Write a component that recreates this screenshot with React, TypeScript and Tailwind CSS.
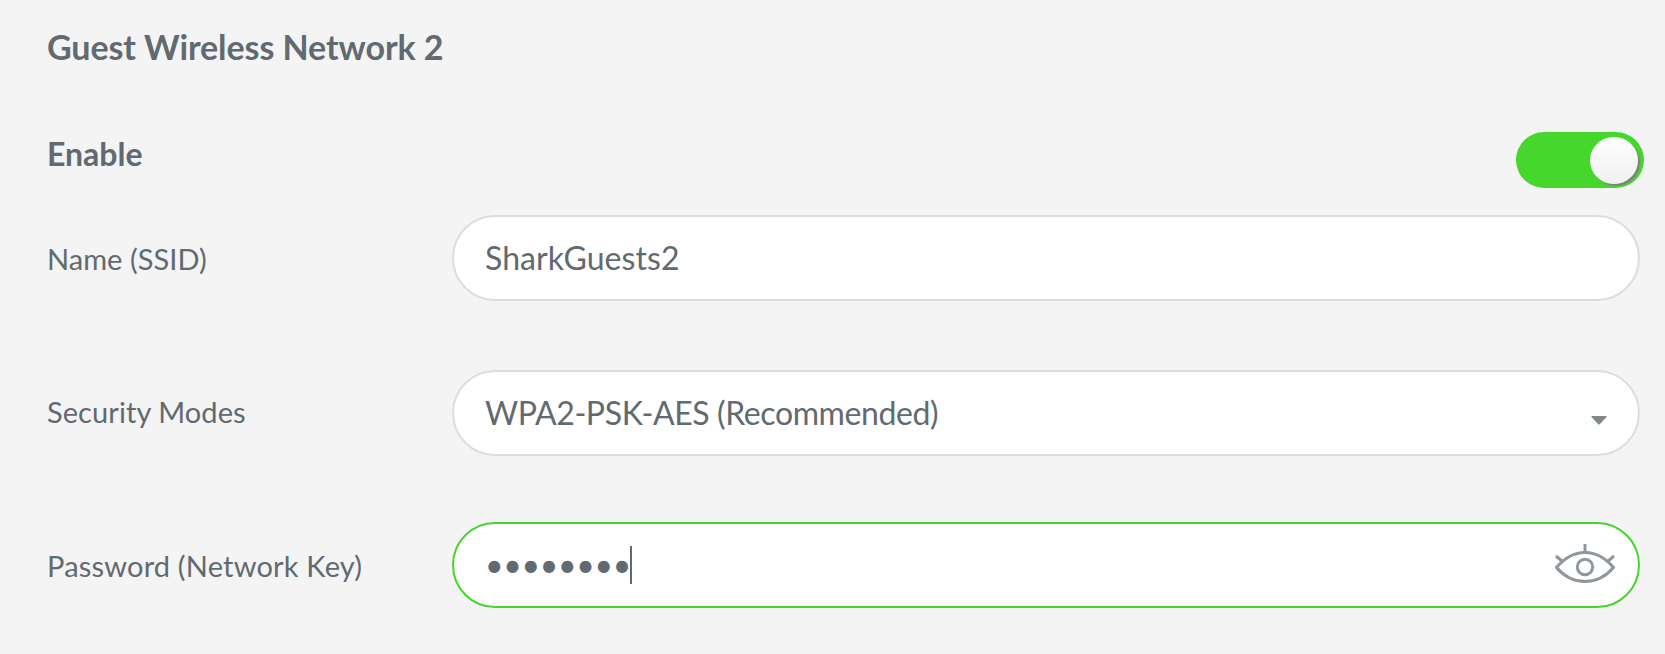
import * as React from 'react';

function EyeIcon() {
  return (
    <svg width="60" height="40" viewBox="0 0 60 40" fill="none" stroke="#8f979c" strokeWidth="3">
      <path d="M1.5 23.5C10 13.5 19 8.5 30 8.5S50 13.5 58.5 23.5C50 33.5 41 37.5 30 37.5S10 33.5 1.5 23.5Z" />
      <circle cx="30" cy="23" r="7.7" />
      <path d="M30 0V8M1 12L8 18M59 12L52 18" />
    </svg>
  );
}

interface IRowProps {
  label: string;
  className?: string;
  labelClass?: string;
  active?: boolean;
  children: React.ReactNode;
}

function Row({ label, className = '', labelClass = '', active, children }: IRowProps) {
  return (
    <div className={`flex items-center h-[86px] ${className}`}>
      <label className={`w-[405px] shrink-0 text-[29px] leading-9 ${labelClass}`}>{label}</label>
      <div className={`flex items-center w-[1188px] h-full rounded-full border-2 bg-white pl-[31px] text-[32px] leading-10 ${active ? 'border-[#45d62e]' : 'border-[#dddddd]'}`}>
        {children}
      </div>
    </div>
  );
}

export default function App() {
  return (
    <div className="h-[654px] overflow-hidden bg-[#f4f4f4] pl-[47px] pt-[26px] font-['Lato',sans-serif] text-[#616a70]">
      <h1 className="h-[42px] text-[34px] leading-[42px] font-bold tracking-[-0.08px]">Guest Wireless Network 2</h1>

      <div className="mt-[64px] flex h-[56px] w-[1597px] justify-between">
        <h2 className="text-[32px] leading-[44px] font-bold">Enable</h2>
        <button className="flex h-[56px] w-[128px] justify-end rounded-full bg-[#46d72d] pt-[5px] pr-[6px]">
          <span className="h-[47px] w-[48px] rounded-full bg-linear-to-b from-white to-[#f0f0f0] shadow-[2px_2px_1px_#808080]"></span>
        </button>
      </div>

      <Row label="Name (SSID)" className="mt-[27px]" labelClass="pt-[1px] tracking-[0.05px]">
        <span className="tracking-[0.08px]">SharkGuests2</span>
      </Row>

      <Row label="Security Modes" className="mt-[69px]" labelClass="pb-[2px] tracking-[0.08px]">
        <span className="tracking-[-0.4px]">WPA2-PSK-AES (Recommended)</span>
        <svg className="mt-[15px] mr-[31px] ml-auto" width="16" height="9" viewBox="0 0 16 9" fill="#7f888d">
          <path d="M1 0H15Q16 0 15.5 1L9 8Q8 9 7 8L.5 1Q0 0 1 0Z" />
        </svg>
      </Row>

      <Row label="Password (Network Key)" className="mt-[66px]" labelClass="pt-[1px] tracking-[0.19px]" active>
        <span className="tracking-[-0.32px]">••••••••</span>
        <span className="-ml-px h-[38px] w-[2px] bg-[#616a70]"></span>
        <span className="mr-[23px] mb-[2px] ml-auto"><EyeIcon /></span>
      </Row>
    </div>
  );
}
